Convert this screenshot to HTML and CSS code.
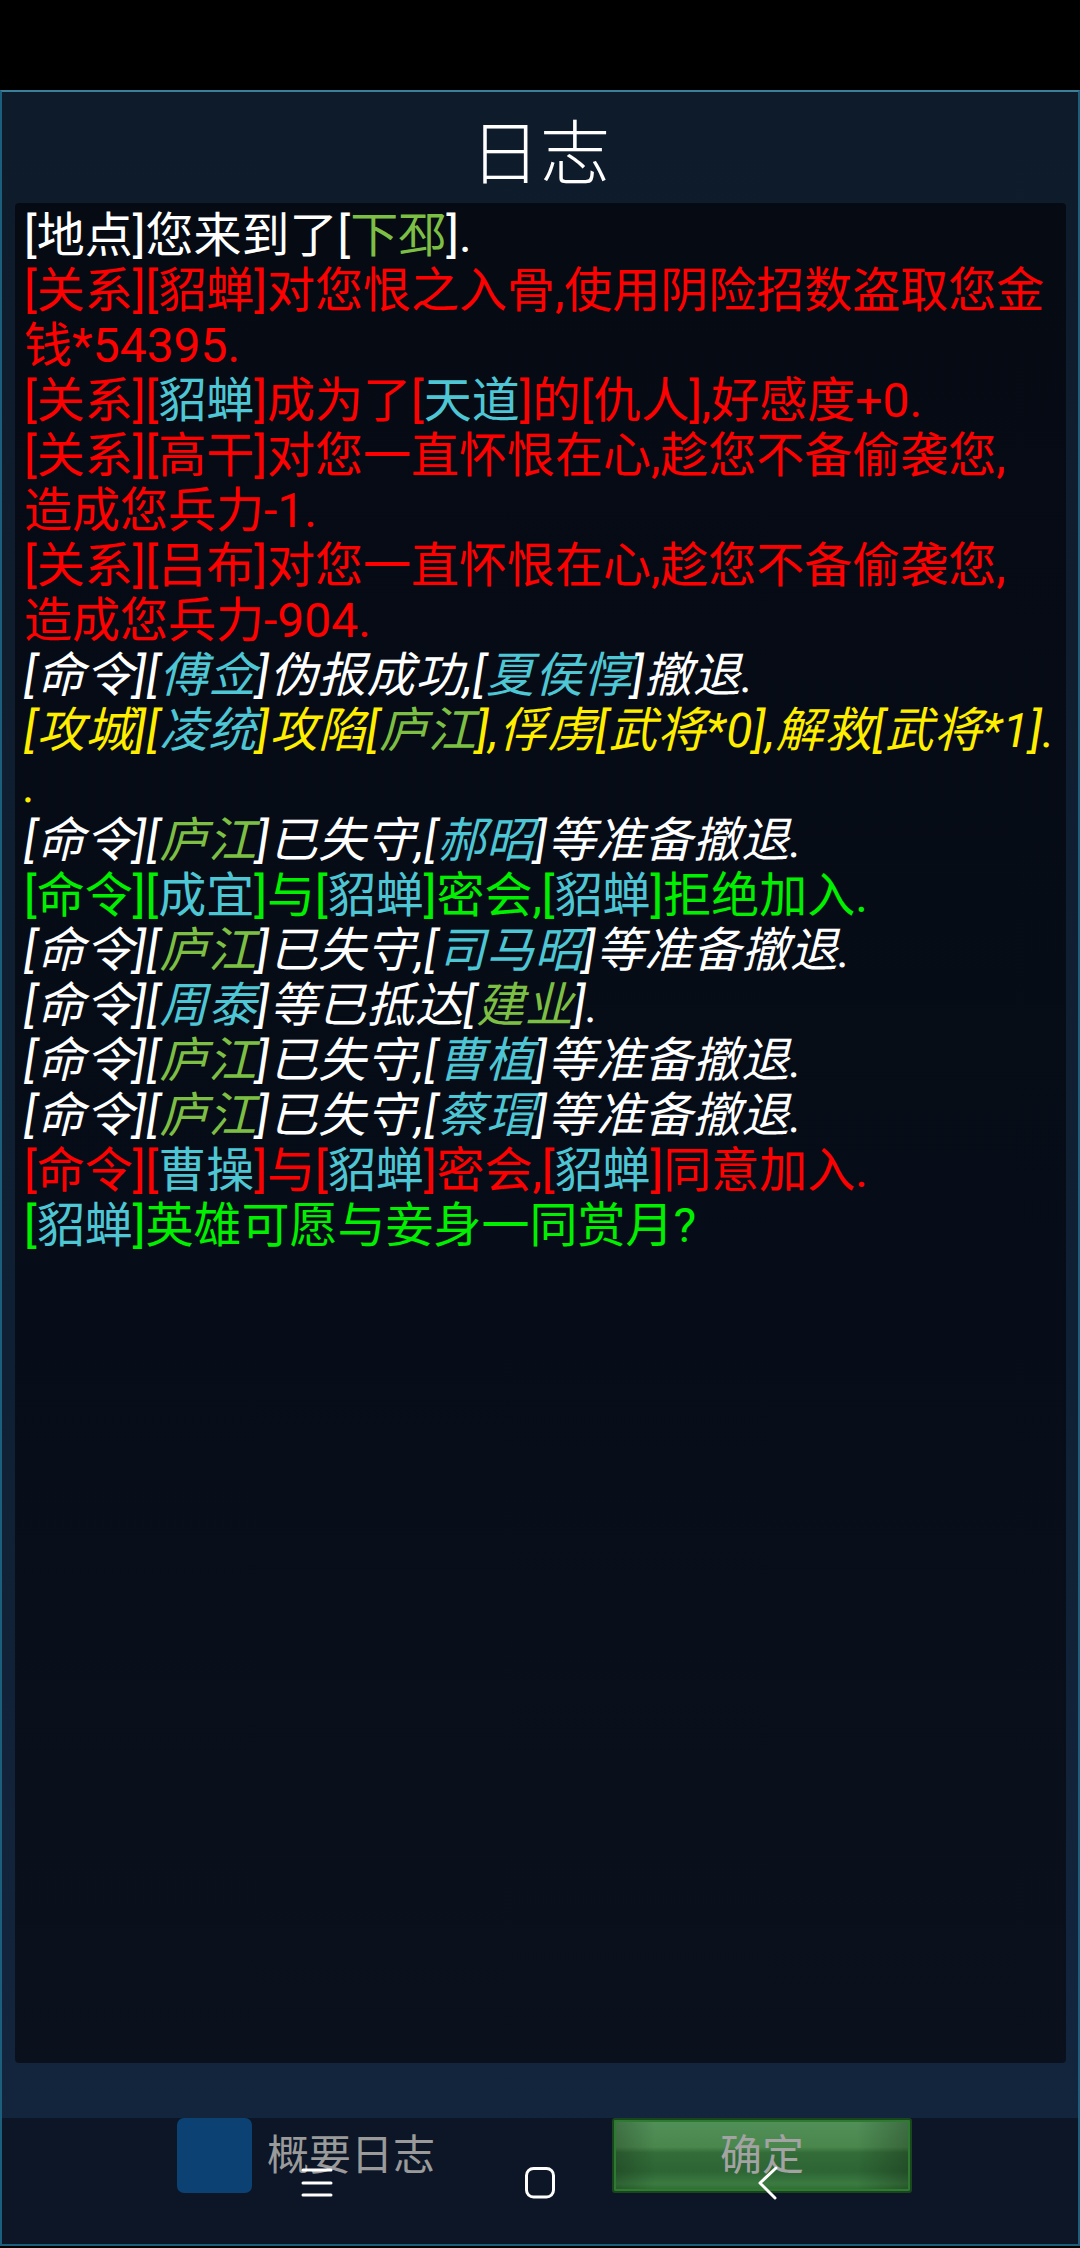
FILE: index.html
```html
<!DOCTYPE html>
<html lang="zh-CN">
<head>
<meta charset="utf-8">
<title>日志</title>
<link rel="stylesheet" href="styles.css">
</head>
<body>
<div class="status"></div>
<div class="panel">
  <div class="title">日志</div>
  <div class="log">
    <div class="entry w">[地点]您来到了[<span class="g">下邳</span>].</div>
    <div class="entry r">[关系][貂蝉]对您恨之入骨,使用阴险招数盗取您金<br>钱*54395.</div>
    <div class="entry r">[关系][<span class="c">貂蝉</span>]成为了[<span class="c">天道</span>]的[仇人],好感度+0.</div>
    <div class="entry r">[关系][高干]对您一直怀恨在心,趁您不备偷袭您,<br>造成您兵力-1.</div>
    <div class="entry r">[关系][吕布]对您一直怀恨在心,趁您不备偷袭您,<br>造成您兵力-904.</div>
    <div class="entry w it">[命令][<span class="c">傅佥</span>]伪报成功,[<span class="c">夏侯惇</span>]撤退.</div>
    <div class="entry y it">[攻城][<span class="c">凌统</span>]攻陷[<span class="g">庐江</span>],俘虏[武将*0],解救[武将*1].<br>.</div>
    <div class="entry w it">[命令][<span class="g">庐江</span>]已失守,[<span class="c">郝昭</span>]等准备撤退.</div>
    <div class="entry lg">[命令][<span class="c">成宜</span>]与[<span class="c">貂蝉</span>]密会,[<span class="c">貂蝉</span>]拒绝加入.</div>
    <div class="entry w it">[命令][<span class="g">庐江</span>]已失守,[<span class="c">司马昭</span>]等准备撤退.</div>
    <div class="entry w it">[命令][<span class="c">周泰</span>]等已抵达[<span class="g">建业</span>].</div>
    <div class="entry w it">[命令][<span class="g">庐江</span>]已失守,[<span class="c">曹植</span>]等准备撤退.</div>
    <div class="entry w it">[命令][<span class="g">庐江</span>]已失守,[<span class="c">蔡瑁</span>]等准备撤退.</div>
    <div class="entry r">[命令][<span class="c">曹操</span>]与[<span class="c">貂蝉</span>]密会,[<span class="c">貂蝉</span>]同意加入.</div>
    <div class="entry lg">[<span class="c">貂蝉</span>]英雄可愿与妾身一同赏月?</div>
  </div>
  <div class="gap"></div>
  <div class="footer">
    <div class="toggle">
      <div class="box"></div>
      <span class="label">概要日志</span>
    </div>
    <div class="ok">确定</div>
  </div>
</div>
<svg class="navicons" width="1080" height="50" viewBox="0 0 1080 50" xmlns="http://www.w3.org/2000/svg">
  <g stroke="#ffffff" stroke-width="3" fill="none" stroke-linecap="round" stroke-linejoin="round">
    <line x1="303" y1="10" x2="331" y2="10"/>
    <line x1="303" y1="23" x2="331" y2="23"/>
    <line x1="303" y1="35" x2="331" y2="35"/>
    <rect x="526.5" y="8.5" width="27" height="28.5" rx="7"/>
    <polyline points="776,8 760,23 775,38"/>
  </g>
</svg>
</body>
</html>
```

FILE: styles.css
```css
html, body {
  margin: 0;
  padding: 0;
}
body {
  width: 1080px;
  height: 2248px;
  background: #000000;
  overflow: hidden;
  position: relative;
  font-family: Roboto, "Noto Sans CJK SC", sans-serif;
}
.status {
  height: 90px;
  background: #000000;
}
.panel {
  box-sizing: border-box;
  height: 2156px;
  border: 2px solid #1b5f7d;
  border-top-color: #3a7f9c;
  background: linear-gradient(to bottom, #0e1b2b 0%, #102034 60%, #13263f 100%);
  display: flex;
  flex-direction: column;
}
.title {
  height: 111px;
  display: flex;
  align-items: center;
  justify-content: center;
  color: #ffffff;
  font-family: "Noto Sans CJK SC", sans-serif;
  font-weight: 300;
  font-size: 70px;
  line-height: 1;
  padding-left: 0;
  padding-top: 2px;
  box-sizing: border-box;
}
.log {
  height: 1860px;
  margin: 0 12px 0 13px;
  padding: 5px 9px 0 9px;
  box-sizing: border-box;
  border-radius: 4px;
  background: linear-gradient(to bottom, #050a13 0%, #070d18 60%, #0a111d 100%);
  font-size: 48px;
  line-height: 55px;
}
.entry {
  white-space: nowrap;
}
.it {
  font-style: italic;
  letter-spacing: 0.5px;
}
.w { color: #ffffff; }
.r { color: #ff0000; }
.y { color: #ffee00; }
.lg { color: #00f000; }
.g { color: #7dbf44; }
.c { color: #4ec6d4; }
.gap {
  height: 55px;
}
.footer {
  flex: 1;
  background: #0c1627;
  display: flex;
  align-items: flex-start;
  padding-left: 175px;
  padding-right: 166px;
}
.toggle {
  display: flex;
  align-items: center;
  gap: 15px;
  height: 75px;
}
.box {
  width: 75px;
  height: 75px;
  border-radius: 7px;
  background: #0b4273;
}
.label {
  color: #9a9a9a;
  font-family: "Noto Sans CJK SC", sans-serif;
  font-size: 42px;
  line-height: 1;
  padding-bottom: 8px;
}
.ok {
  margin-left: auto;
  box-sizing: border-box;
  width: 300px;
  height: 75px;
  padding-bottom: 8px;
  border: 2px solid #1a461d;
  border-radius: 3px;
  box-shadow: inset 0 0 0 2px #2d7a30;
  background:
    linear-gradient(to right, rgba(0,0,0,0.22) 0%, rgba(0,0,0,0) 14%, rgba(0,0,0,0) 82%, rgba(0,0,0,0.25) 100%),
    linear-gradient(to bottom, #52905a 0%, #4a874d 38%, #336c39 46%, #2d6534 72%, #3b7b41 90%, #2c6a2e 100%);
  color: #a3a3a3;
  font-family: "Noto Sans CJK SC", sans-serif;
  font-size: 42px;
  line-height: 1;
  display: flex;
  align-items: center;
  justify-content: center;
}
.navicons {
  position: absolute;
  left: 0;
  top: 2160px;
  pointer-events: none;
}
```
